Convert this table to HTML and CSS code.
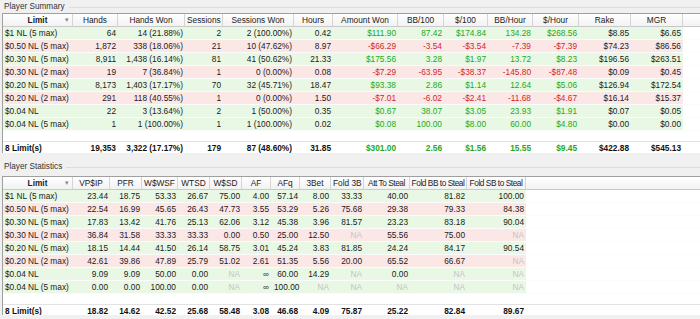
FILE: index.html
```html
<!DOCTYPE html>
<html lang="en">
<head>
    <meta charset="UTF-8">
    <title>Player Summary</title>
    <link rel="stylesheet" href="styles.css">
</head>
<body>
    <!-- Player Summary -->
    <div class="group-title first">Player Summary</div>
    <div class="grid">
        <table>
            <colgroup>
                <col style="width:70px"><col style="width:45px"><col style="width:67px"><col style="width:38px">
                <col style="width:71px"><col style="width:39px"><col style="width:65px"><col style="width:46px">
                <col style="width:44px"><col style="width:45px"><col style="width:46px"><col style="width:52px">
                <col style="width:52px"><col>
            </colgroup>
            <thead>
                <tr>
                    <th class="sort">Limit<span class="arrow">&#9662;</span></th>
                    <th>Hands</th>
                    <th>Hands Won</th>
                    <th>Sessions</th>
                    <th>Sessions Won</th>
                    <th>Hours</th>
                    <th>Amount Won</th>
                    <th>BB/100</th>
                    <th>$/100</th>
                    <th>BB/Hour</th>
                    <th>$/Hour</th>
                    <th>Rake</th>
                    <th>MGR</th>
                    <th class="fill"></th>
                </tr>
            </thead>
            <tbody>
                <tr class="win">
                    <td class="name">$1 NL (5 max)</td><td>64</td><td>14 (21.88%)</td><td>2</td><td>2 (100.00%)</td><td>0.42</td>
                    <td class="pos">$111.90</td><td class="pos">87.42</td><td class="pos">$174.84</td><td class="pos">134.28</td><td class="pos">$268.56</td>
                    <td>$8.85</td><td>$6.65</td><td class="fill"></td>
                </tr>
                <tr class="loss">
                    <td class="name">$0.50 NL (5 max)</td><td>1,872</td><td>338 (18.06%)</td><td>21</td><td>10 (47.62%)</td><td>8.97</td>
                    <td class="neg">-$66.29</td><td class="neg">-3.54</td><td class="neg">-$3.54</td><td class="neg">-7.39</td><td class="neg">-$7.39</td>
                    <td>$74.23</td><td>$86.56</td><td class="fill"></td>
                </tr>
                <tr class="win">
                    <td class="name">$0.30 NL (5 max)</td><td>8,911</td><td>1,438 (16.14%)</td><td>81</td><td>41 (50.62%)</td><td>21.33</td>
                    <td class="pos">$175.56</td><td class="pos">3.28</td><td class="pos">$1.97</td><td class="pos">13.72</td><td class="pos">$8.23</td>
                    <td>$196.56</td><td>$263.51</td><td class="fill"></td>
                </tr>
                <tr class="loss">
                    <td class="name">$0.30 NL (2 max)</td><td>19</td><td>7 (36.84%)</td><td>1</td><td>0 (0.00%)</td><td>0.08</td>
                    <td class="neg">-$7.29</td><td class="neg">-63.95</td><td class="neg">-$38.37</td><td class="neg">-145.80</td><td class="neg">-$87.48</td>
                    <td>$0.09</td><td>$0.45</td><td class="fill"></td>
                </tr>
                <tr class="win">
                    <td class="name">$0.20 NL (5 max)</td><td>8,173</td><td>1,403 (17.17%)</td><td>70</td><td>32 (45.71%)</td><td>18.47</td>
                    <td class="pos">$93.38</td><td class="pos">2.86</td><td class="pos">$1.14</td><td class="pos">12.64</td><td class="pos">$5.06</td>
                    <td>$126.94</td><td>$172.54</td><td class="fill"></td>
                </tr>
                <tr class="loss">
                    <td class="name">$0.20 NL (2 max)</td><td>291</td><td>118 (40.55%)</td><td>1</td><td>0 (0.00%)</td><td>1.50</td>
                    <td class="neg">-$7.01</td><td class="neg">-6.02</td><td class="neg">-$2.41</td><td class="neg">-11.68</td><td class="neg">-$4.67</td>
                    <td>$16.14</td><td>$15.37</td><td class="fill"></td>
                </tr>
                <tr class="win">
                    <td class="name">$0.04 NL</td><td>22</td><td>3 (13.64%)</td><td>2</td><td>1 (50.00%)</td><td>0.35</td>
                    <td class="pos">$0.67</td><td class="pos">38.07</td><td class="pos">$3.05</td><td class="pos">23.93</td><td class="pos">$1.91</td>
                    <td>$0.07</td><td>$0.05</td><td class="fill"></td>
                </tr>
                <tr class="win">
                    <td class="name">$0.04 NL (5 max)</td><td>1</td><td>1 (100.00%)</td><td>1</td><td>1 (100.00%)</td><td>0.02</td>
                    <td class="pos">$0.08</td><td class="pos">100.00</td><td class="pos">$8.00</td><td class="pos">60.00</td><td class="pos">$4.80</td>
                    <td>$0.00</td><td>$0.00</td><td class="fill"></td>
                </tr>
                <tr class="spacer"><td colspan="14"></td></tr>
                <tr class="total">
                    <td class="name">8 Limit(s)</td><td>19,353</td><td class="tight">3,322 (17.17%)</td><td>179</td><td>87 (48.60%)</td><td>31.85</td>
                    <td class="pos">$301.00</td><td class="pos">2.56</td><td class="pos">$1.56</td><td class="pos">15.55</td><td class="pos">$9.45</td>
                    <td>$422.88</td><td>$545.13</td><td class="fill"></td>
                </tr>
            </tbody>
        </table>
    </div>

    <!-- Player Statistics -->
    <div class="group-title second">Player Statistics</div>
    <div class="grid">
        <table>
            <colgroup>
                <col style="width:70px"><col style="width:37px"><col style="width:32px"><col style="width:36px">
                <col style="width:32px"><col style="width:32px"><col style="width:29px"><col style="width:29px">
                <col style="width:31px"><col style="width:33px"><col style="width:46px"><col style="width:57px">
                <col style="width:59px"><col>
            </colgroup>
            <thead>
                <tr>
                    <th class="sort">Limit<span class="arrow">&#9662;</span></th>
                    <th>VP$IP</th>
                    <th>PFR</th>
                    <th>W$WSF</th>
                    <th>WTSD</th>
                    <th>W$SD</th>
                    <th>AF</th>
                    <th>AFq</th>
                    <th>3Bet</th>
                    <th>Fold 3B</th>
                    <th class="narrow">Att To Steal</th>
                    <th class="narrow">Fold BB to Steal</th>
                    <th class="narrow">Fold SB to Steal</th>
                    <th class="fill"></th>
                </tr>
            </thead>
            <tbody>
                <tr class="win">
                    <td class="name">$1 NL (5 max)</td><td>23.44</td><td>18.75</td><td>53.33</td><td>26.67</td><td>75.00</td><td>4.00</td>
                    <td>57.14</td><td>8.00</td><td>33.33</td><td>40.00</td><td>81.82</td><td>100.00</td><td class="fill"></td>
                </tr>
                <tr class="loss">
                    <td class="name">$0.50 NL (5 max)</td><td>22.54</td><td>16.99</td><td>45.65</td><td>26.43</td><td>47.73</td><td>3.55</td>
                    <td>53.29</td><td>5.26</td><td>75.68</td><td>29.38</td><td>79.33</td><td>84.38</td><td class="fill"></td>
                </tr>
                <tr class="win">
                    <td class="name">$0.30 NL (5 max)</td><td>17.83</td><td>13.42</td><td>41.76</td><td>25.13</td><td>62.06</td><td>3.12</td>
                    <td>45.38</td><td>3.96</td><td>81.57</td><td>23.23</td><td>83.18</td><td>90.04</td><td class="fill"></td>
                </tr>
                <tr class="loss">
                    <td class="name">$0.30 NL (2 max)</td><td>36.84</td><td>31.58</td><td>33.33</td><td>33.33</td><td>0.00</td><td>0.50</td>
                    <td>25.00</td><td>12.50</td><td class="na">NA</td><td>55.56</td><td>75.00</td><td class="na">NA</td><td class="fill"></td>
                </tr>
                <tr class="win">
                    <td class="name">$0.20 NL (5 max)</td><td>18.15</td><td>14.44</td><td>41.50</td><td>26.14</td><td>58.75</td><td>3.01</td>
                    <td>45.24</td><td>3.83</td><td>81.85</td><td>24.24</td><td>84.17</td><td>90.54</td><td class="fill"></td>
                </tr>
                <tr class="loss">
                    <td class="name">$0.20 NL (2 max)</td><td>42.61</td><td>39.86</td><td>47.89</td><td>25.79</td><td>51.02</td><td>2.61</td>
                    <td>51.35</td><td>5.56</td><td>20.00</td><td>65.52</td><td>66.67</td><td class="na">NA</td><td class="fill"></td>
                </tr>
                <tr class="win">
                    <td class="name">$0.04 NL</td><td>9.09</td><td>9.09</td><td>50.00</td><td>0.00</td><td class="na">NA</td><td>&infin;</td>
                    <td>60.00</td><td>14.29</td><td class="na">NA</td><td>0.00</td><td class="na">NA</td><td class="na">NA</td><td class="fill"></td>
                </tr>
                <tr class="win">
                    <td class="name">$0.04 NL (5 max)</td><td>0.00</td><td>0.00</td><td>100.00</td><td>0.00</td><td class="na">NA</td><td>&infin;</td>
                    <td>100.00</td><td class="na">NA</td><td class="na">NA</td><td class="na">NA</td><td class="na">NA</td><td class="na">NA</td><td class="fill"></td>
                </tr>
                <tr class="spacer"><td colspan="14"></td></tr>
                <tr class="total">
                    <td class="name">8 Limit(s)</td><td>18.82</td><td>14.62</td><td>42.52</td><td>25.68</td><td>58.48</td><td>3.08</td>
                    <td>46.68</td><td>4.09</td><td>75.87</td><td>25.22</td><td>82.84</td><td>89.67</td><td class="fill"></td>
                </tr>
            </tbody>
        </table>
    </div>
</body>
</html>
```

FILE: styles.css
```css
* {
    box-sizing: border-box;
}
body {
    margin: 0;
    background-color: #f0f0f0;
    font-family: "Liberation Sans", Arial, sans-serif;
    font-size: 8.3px;
    color: #1a1a1a;
    overflow: hidden;
}
.group-title {
    display: flex;
    align-items: center;
    height: 13px;
    padding-left: 4px;
    font-size: 8.2px;
    color: #333;
}
.group-title::after {
    content: "";
    flex: 1;
    margin: 2px 0 0 4px;
    border-top: 1px solid #dcdcdc;
}
.group-title.second {
    margin-top: 7px;
    margin-bottom: 3px;
}
.grid {
    height: 140px;
    margin-left: 2px;
    margin-right: -10px;
    overflow: hidden;
    background-color: #fff;
    border-top: 1px solid #a0a0a0;
    border-left: 1px solid #a0a0a0;
}
.grid + .group-title + .grid {
    height: 139px;
}
table {
    width: 100%;
    table-layout: fixed;
    border-collapse: separate;
    border-spacing: 0;
}
th {
    position: relative;
    height: 13px;
    padding: 0 2px;
    line-height: 12px;
    font-weight: normal;
    text-align: center;
    color: #222;
    white-space: nowrap;
    overflow: hidden;
    background: linear-gradient(#ffffff, #f2f2f2);
    border-right: 1px solid #d5d5d5;
    border-bottom: 1px solid #c9c9c9;
}
th.sort {
    font-weight: bold;
}
th.narrow {
    padding: 0 1px;
    letter-spacing: -0.45px;
}
.arrow {
    position: absolute;
    right: 3px;
    top: 0;
    font-size: 7px;
    font-weight: normal;
    color: #888;
}
td {
    height: 13px;
    padding: 0 2px 0 3px;
    line-height: 12px;
    text-align: right;
    white-space: nowrap;
    overflow: hidden;
    border-bottom: 1px solid #fbfbfb;
}
td.name {
    text-align: left;
    padding-left: 2px;
}
.win td {
    background-color: #e9f8e4;
}
.loss td {
    background-color: #fce7e7;
}
.win td.fill, .loss td.fill {
    background-color: #fff;
}
.pos {
    color: #22a822;
}
.neg {
    color: #d02828;
}
.na {
    color: #c4c4c4;
}
.spacer td {
    height: 10px;
    border-bottom: none;
}
.total td {
    height: 13px;
    font-weight: bold;
    color: #111;
    border-top: 1px solid #e2e2e2;
    border-bottom: none;
}
.total td.pos {
    color: #22a822;
}
.total td.tight {
    padding-left: 0;
}
```
